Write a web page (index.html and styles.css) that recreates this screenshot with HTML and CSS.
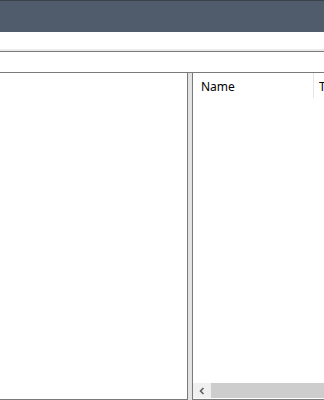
FILE: index.html
```html
<!DOCTYPE html>
<html lang="en">
<head>
  <meta charset="UTF-8">
  <meta name="viewport" content="width=device-width, initial-scale=1.0">
  <title>Explorer</title>
  <link rel="stylesheet" href="styles.css">
</head>
<body>
  <div class="titlebar"></div>
  <div class="toolbar"></div>
  <div class="addressbar"></div>
  <div class="main">
    <div class="tree"></div>
    <div class="splitter"></div>
    <div class="list">
      <div class="list-header">
        <div class="col col-name">Name</div>
        <div class="col col-type">Type</div>
      </div>
      <div class="list-body"></div>
      <div class="hscroll">
        <div class="arrow">
          <svg width="8" height="8" viewBox="0 0 8 8"><path d="M5.5 1 L2.5 4 L5.5 7" fill="none" stroke="#606060" stroke-width="1.6"/></svg>
        </div>
        <div class="thumb"></div>
      </div>
    </div>
  </div>
</body>
</html>
```

FILE: styles.css
```css
body {
  font-family: "Noto Sans", "Open Sans", sans-serif;
  font-size: 12px;
  margin: 0;
  width: 324px;
  height: 400px;
  overflow: hidden;
  background: #fff;
}
.titlebar {
  height: 31px;
  background: #505c6b;
  border-top: 1px solid #3a414b;
}
.toolbar {
  height: 17px;
  background: #fff;
  border-bottom: 2px solid #ebebeb;
}
.addressbar {
  height: 20px;
  background: #fff;
  border-top: 1px solid #7a7a7a;
  border-bottom: 1px solid #7a7a7a;
}
.main {
  display: flex;
  height: 327px;
}
.tree {
  width: 187px;
  flex-shrink: 0;
  border-right: 1px solid #7a7a7a;
  border-bottom: 1px solid #7a7a7a;
}
.splitter {
  width: 4px;
  flex-shrink: 0;
  background: #e3e3e3;
}
.list {
  flex: 1;
  display: flex;
  flex-direction: column;
  border-left: 1px solid #7a7a7a;
  border-bottom: 1px solid #7a7a7a;
  min-width: 0;
  overflow: hidden;
}
.list-header {
  display: flex;
  height: 25px;
  flex-shrink: 0;
  white-space: nowrap;
}
.col {
  padding-left: 8px;
  padding-top: 3px;
  line-height: 22px;
  color: #000;
}
.col-name {
  width: 112px;
  flex-shrink: 0;
  border-right: 1px solid #e5e5e5;
}
.col-type {
  padding-left: 5px;
}
.list-body {
  flex: 1;
}
.hscroll {
  display: flex;
  height: 15px;
  flex-shrink: 0;
  margin-bottom: 1px;
}
.arrow {
  width: 18px;
  background: #f0f0f0;
  display: flex;
  align-items: center;
  justify-content: center;
}
.thumb {
  flex: 1;
  background: #cdcdcd;
}
```
